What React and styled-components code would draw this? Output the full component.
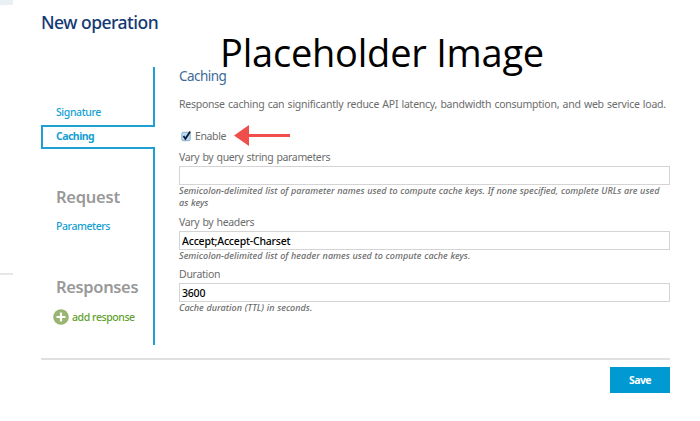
import React from 'react';
import styled, { createGlobalStyle, css } from 'styled-components';

const Global = createGlobalStyle`
  * { box-sizing: border-box; }
  body { margin: 0; background: #fff; font-family: "Noto Sans", sans-serif; }
`;

const Page = styled.div`
  position: relative;
  display: flex;
  gap: 28px;
  width: 700px;
  height: 421px;
  overflow: hidden;
`;

const Rail = styled.aside`
  width: 13px;
  height: 275px;
  border-top: 5px solid #e9f0f4;
  border-bottom: 2px solid #e7e7e7;
`;

const Main = styled.main`
  width: 629px;
  padding-top: 10px;
`;

const Title = styled.h1`
  margin: 0 0 33px;
  font-size: 17.5px;
  font-weight: 500;
  line-height: 24px;
  letter-spacing: -0.5px;
  color: #133972;
`;

const Columns = styled.div`
  display: grid;
  grid-template-columns: 114px 491px;
  column-gap: 24px;
  height: 278px;
`;

const Nav = styled.nav`
  display: flex;
  flex-direction: column;
`;

const NavGroup = styled.div`
  height: ${(p) => p.$height};
  ${(p) => p.$grow && css`flex: 1;`}
  padding: ${(p) => p.$pad} 0 0 15px;
  border-right: 2px solid #1da1d4;
`;

const linkText = css`
  font-size: 10.5px;
  line-height: 14px;
  white-space: nowrap;
`;

const NavLink = styled.a`
  display: block;
  ${linkText}
  font-weight: 500;
  letter-spacing: ${(p) => p.$track};
  color: #169fd3;
`;

const ActiveItem = styled.a`
  display: block;
  height: 24px;
  padding: 2px 0 0 13px;
  border: 2px solid #1da1d4;
  border-right: 0;
  ${linkText}
  font-weight: 700;
  letter-spacing: -0.53px;
  color: #169fd3;
`;

const NavHeading = styled.h3`
  margin: 0 0 ${(p) => p.$gap};
  font-size: 16.5px;
  font-weight: 600;
  line-height: 22px;
  letter-spacing: ${(p) => p.$track};
  color: #999;
`;

const Responses = styled.section`
  margin-top: 43px;
`;

const AddLink = styled.a`
  display: flex;
  align-items: center;
  gap: 3px;
  margin-left: -3px;
  ${linkText}
  line-height: 16px;
  font-weight: 500;
  letter-spacing: -0.42px;
  color: #63a02f;
`;

const Form = styled.form`
  display: flex;
  flex-direction: column;
`;

const FormHeading = styled.h2`
  margin: 0 0 12px;
  font-size: 13.5px;
  font-weight: 400;
  line-height: 18px;
  letter-spacing: -0.53px;
  color: #3d6a99;
`;

const Text = styled.p`
  margin: 0;
  font-size: 10.5px;
  line-height: 14px;
  letter-spacing: ${(p) => p.$track};
  word-spacing: 0.8px;
  white-space: nowrap;
  color: #6c6c6c;
`;

const CheckRow = styled.div`
  display: flex;
  height: 21px;
  margin: 14px 0 4px 2px;
  align-items: center;
`;

const Enable = styled(Text)`
  width: 39px;
  margin-left: 3px;
`;

const Field = styled.div`
  display: flex;
  flex-direction: column;
  height: ${(p) => p.$height};
`;

const Input = styled.input`
  height: 19px;
  margin: 2px 0 0;
  padding: 0 3px 0 2px;
  border: 1px solid #d4d4d4;
  outline: 0;
  font: 500 10.5px/16px "Noto Sans", sans-serif;
  letter-spacing: -0.2px;
  color: #000;
`;

const Help = styled.p`
  margin: 0;
  font-size: 9px;
  font-style: italic;
  font-weight: 500;
  line-height: 12px;
  letter-spacing: 0.04px;
  word-spacing: 0.3px;
  color: #6c6c6c;
`;

const Footer = styled.footer`
  display: flex;
  justify-content: flex-end;
  margin-top: 13px;
  padding-top: 7px;
  border-top: 2px solid #e0e0e0;
`;

const Save = styled.button`
  width: 60px;
  height: 26px;
  padding: 0;
  border: 0;
  background: #0099d2;
  color: #fff;
  font: 700 10.5px/26px "Noto Sans", sans-serif;
  letter-spacing: -0.6px;
`;

const Watermark = styled.div`
  position: absolute;
  left: 220px;
  top: 25px;
  font: 400 38px/54px "Open Sans", sans-serif;
  letter-spacing: -0.22px;
  white-space: nowrap;
  color: #000;
`;

const Check = () => (
  <svg width="11" height="12" viewBox="0 0 11 12">
    <rect x="0.8" y="2.3" width="8.4" height="8.4" rx="1.2" fill="#b9dcf5" stroke="#8ba9c4" strokeWidth="0.9" />
    <path d="M2.5 6.1 L4.4 8.8 L9.2 1.6" fill="none" stroke="#101d3c" strokeWidth="1.8" />
  </svg>
);

const Arrow = () => (
  <svg width="56" height="21" viewBox="0 0 56 21">
    <path d="M0 10.5 L15 0 V9 H56 V12 H15 V21 Z" fill="#f04e4a" />
  </svg>
);

const Plus = () => (
  <svg width="16" height="16" viewBox="0 0 16 16">
    <circle cx="8" cy="8" r="7.8" fill="#98b574" />
    <path d="M8 3.5 V12.5 M3.5 8 H12.5" stroke="#fff" strokeWidth="2.2" />
  </svg>
);

export default function App() {
  return (
    <Page>
      <Global />
      <Rail />
      <Main>
        <Title>New operation</Title>
        <Columns>
          <Nav>
            <NavGroup $height="58px" $pad="38px">
              <NavLink $track="-0.4px">Signature</NavLink>
            </NavGroup>
            <ActiveItem>Caching</ActiveItem>
            <NavGroup $grow $pad="37px">
              <NavHeading $gap="11px" $track="-0.25px">Request</NavHeading>
              <NavLink $track="-0.42px">Parameters</NavLink>
              <Responses>
                <NavHeading $gap="11px" $track="-0.35px">Responses</NavHeading>
                <AddLink>
                  <Plus />
                  add response
                </AddLink>
              </Responses>
            </NavGroup>
          </Nav>
          <Form>
            <FormHeading>Caching</FormHeading>
            <Text $track="-0.25px">
              Response caching can significantly reduce API latency, bandwidth consumption, and web service load.
            </Text>
            <CheckRow>
              <Check />
              <Enable $track="-0.38px">Enable</Enable>
              <Arrow />
            </CheckRow>
            <Field $height="65px">
              <Text $track="-0.35px">Vary by query string parameters</Text>
              <Input readOnly value="" />
              <Help>
                Semicolon-delimited list of parameter names used to compute cache keys. If none specified, complete URLs are used as keys
              </Help>
            </Field>
            <Field $height="52px">
              <Text $track="-0.35px">Vary by headers</Text>
              <Input readOnly value="Accept;Accept-Charset" />
              <Help>Semicolon-delimited list of header names used to compute cache keys.</Help>
            </Field>
            <Field $height="50px">
              <Text $track="-0.28px">Duration</Text>
              <Input readOnly value="3600" />
              <Help>Cache duration (TTL) in seconds.</Help>
            </Field>
          </Form>
        </Columns>
        <Footer>
          <Save type="button">Save</Save>
        </Footer>
      </Main>
      <Watermark>Placeholder Image</Watermark>
    </Page>
  );
}
